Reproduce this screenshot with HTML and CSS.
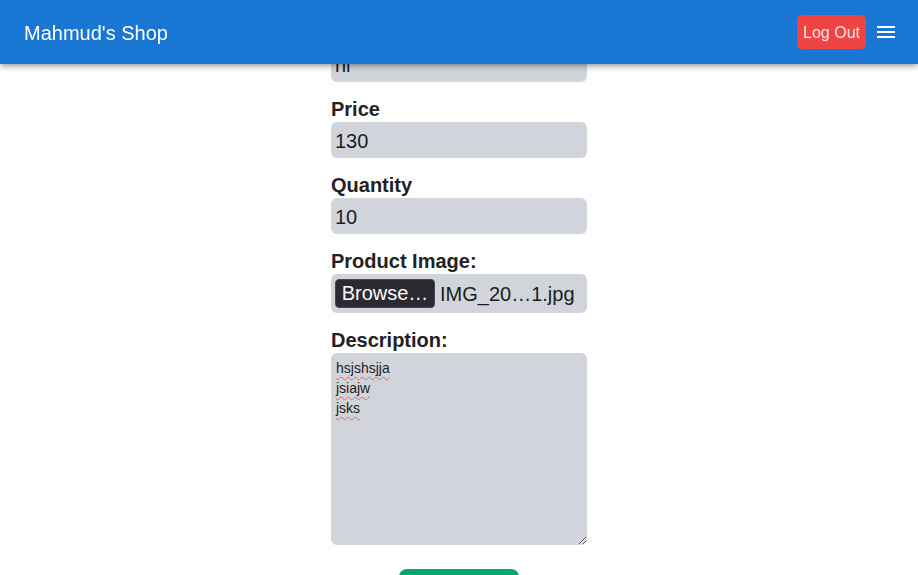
FILE: index.html
```html
<!DOCTYPE html>
<html lang="en">
<head>
<meta charset="utf-8">
<title>Mahmud's Shop</title>
<link rel="stylesheet" href="styles.css">
</head>
<body>
<header class="appbar">
  <div class="brand">Mahmud's Shop</div>
  <div class="actions">
    <button class="logout" type="button">Log Out</button>
    <span class="menu-icon" aria-label="menu">
      <svg width="24" height="24" viewBox="0 0 24 24"><path fill="#fff" d="M3 18h18v-2H3v2zm0-5h18v-2H3v2zm0-7v2h18V6H3z"/></svg>
    </span>
  </div>
</header>
<main class="page">
  <form class="product-form">
    <div class="field">
      <label class="label">Product Name</label>
      <div class="input">hi</div>
    </div>
    <div class="field">
      <label class="label">Price</label>
      <div class="input">130</div>
    </div>
    <div class="field">
      <label class="label">Quantity</label>
      <div class="input">10</div>
    </div>
    <div class="field">
      <label class="label">Product Image:</label>
      <div class="file-input">
        <span class="browse">Browse…</span>
        <span class="filename">IMG_20…1.jpg</span>
      </div>
    </div>
    <div class="field">
      <label class="label">Description:</label>
      <div class="textarea"><span class="misspelt">hsjshsjja</span><br><span class="misspelt">jsiajw</span><br><span class="misspelt">jsks</span></div>
    </div>
    <div class="submit-row">
      <button class="submit" type="button">Update</button>
    </div>
  </form>
</main>
</body>
</html>
```

FILE: styles.css
```css
* { box-sizing: border-box; }

body {
  margin: 0;
  font-family: "Liberation Sans", Arial, sans-serif;
  background: #ffffff;
  color: #222222;
}

.appbar {
  position: fixed;
  top: 0;
  left: 0;
  right: 0;
  height: 64px;
  background: #1976d2;
  color: #ffffff;
  display: flex;
  align-items: center;
  justify-content: space-between;
  padding: 0 20px 0 24px;
  box-shadow: 0 2px 4px -1px rgba(0,0,0,0.2), 0 4px 5px 0 rgba(0,0,0,0.14), 0 1px 10px 0 rgba(0,0,0,0.12);
  z-index: 10;
}

.brand {
  font-size: 20px;
  line-height: 24px;
  padding-top: 2px;
}

.actions {
  display: flex;
  align-items: center;
  gap: 8px;
}

.logout {
  height: 34px;
  padding: 2px 6px 0;
  border: none;
  border-radius: 5px;
  background: #ef4444;
  color: #fde9e9;
  font-family: "Liberation Sans", Arial, sans-serif;
  font-size: 16px;
}

.menu-icon {
  display: flex;
  width: 24px;
  height: 24px;
}

.page {
  padding-top: 22px;
  padding-bottom: 40px;
}

.product-form {
  width: 256px;
  margin: 0 auto;
}

.field {
  margin-bottom: 16px;
}

.label {
  display: block;
  font-size: 20px;
  line-height: 22px;
  font-weight: 700;
  margin-bottom: 2px;
  color: #222222;
}

.input {
  height: 36px;
  background: #d1d5db;
  border-radius: 6px;
  padding: 2px 4px 0;
  font-size: 20px;
  line-height: 34px;
  color: #1c1c1c;
}

.file-input {
  height: 39px;
  background: #d1d5db;
  border-radius: 6px;
  padding: 5px 4px;
  display: flex;
  align-items: center;
  gap: 5px;
  font-size: 20px;
  color: #1c1c1c;
  white-space: nowrap;
}

.browse {
  height: 29px;
  width: 100px;
  background: #2b2a33;
  color: #fbfbfe;
  border-radius: 4px;
  border: 1px solid #4a4950;
  line-height: 27px;
  text-align: center;
}

.filename {
  padding-top: 1px;
}

.textarea {
  height: 192px;
  background: #d1d5db;
  border-radius: 6px;
  padding: 5px 5px;
  font-size: 14px;
  line-height: 20px;
  color: #1c1c1c;
  resize: vertical;
  overflow: auto;
}

.misspelt {
  text-decoration: underline wavy #f06060;
  text-decoration-thickness: 1px;
  text-underline-offset: 3px;
}

.submit-row {
  display: flex;
  justify-content: center;
  padding-top: 8px;
}

.submit {
  width: 120px;
  height: 40px;
  border: none;
  border-radius: 8px;
  background: #00a86b;
  color: #ffffff;
  font-family: "Liberation Sans", Arial, sans-serif;
  font-size: 18px;
}
```
